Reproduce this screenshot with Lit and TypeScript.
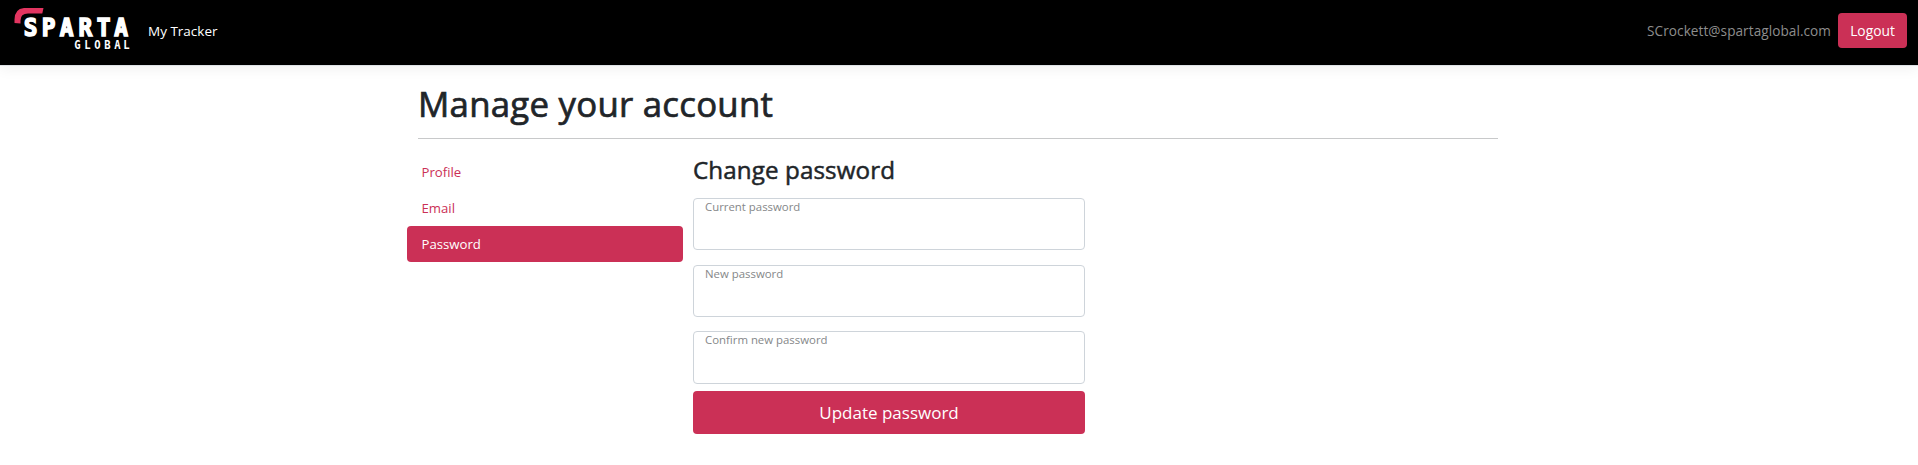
import { LitElement, html, svg, css } from "lit";
import { customElement } from "lit/decorators.js";
import { classMap } from "lit/directives/class-map.js";

const LINKS = ["Profile", "Email", "Password"];
const FIELDS = ["Current password", "New password", "Confirm new password"];

@customElement("sparta-logo")
class SpartaLogo extends LitElement {
  static styles = css`
    :host { display: block; width: 122px; height: 46px; }
    svg { display: block; }
    text { fill: #fff; text-anchor: middle; font-weight: 700; font-family: "DejaVu Sans Mono", monospace; }
    .big { font-size: 24.5px; stroke: #fff; stroke-width: 1.5; stroke-linejoin: miter; }
    .small { font-size: 12px; }
  `;
  render() {
    return html`<svg width="122" height="46" viewBox="10 8.4 122 46" role="img" aria-label="Sparta Global">
      ${svg`<path d="M14.5 23.5 V20 Q14.5 8.3 26 8.3 H43.5 L42.3 14 H28 Q20.5 14 20.5 21 V24 Z" fill="#e33560"/>
      <text class="big" transform="scale(.93 1)" x="32.8 52.2 71.6 91.9 111.3 130.2" y="36.4">SPARTA</text>
      <text class="small" transform="scale(.88 1)" x="88.1 99.4 110.8 122.2 133.5 143.8" y="49.8">GLOBAL</text>`}
    </svg>`;
  }
}

@customElement("app-root")
class AppRoot extends LitElement {
  static styles = css`
    :host {
      display: block; min-height: 465px; background: #fff; color: #212529;
      font: 14px/21px "Open Sans", "Noto Sans", sans-serif;
    }
    * { box-sizing: border-box; }
    header {
      height: 66px; display: flex; align-items: center; padding: 0 11px 4px 10px;
      background: #000; border-bottom: 1px solid #dee2e6;
      box-shadow: 0 4px 12px rgba(0, 0, 0, 0.05);
    }
    .tracker { margin: 1px 0 0 16px; color: #fff; font-size: 13.5px; flex: 1; }
    .mail { color: #8d8d8d; font-size: 13.6px; letter-spacing: 0.06px; margin: 0 7px 1px 0; }
    button {
      border: 0; border-radius: 4px; background: #cb3056; color: #fff;
      font-family: inherit; padding: 0;
    }
    .logout { width: 69px; height: 35px; font-size: 13.8px; }
    main { width: 1080px; margin: 14px 0 0 418px; }
    h1, h2 { margin: 0; font-weight: 400; white-space: nowrap; }
    h1 { font-size: 34.8px; line-height: 48px; letter-spacing: 0.25px; -webkit-text-stroke: 0.7px #212529; }
    hr { margin: 10px 0 14px; border: 0; height: 1px; background: #c8c9ca; }
    .row { display: flex; margin-left: -11px; }
    nav { width: 276px; padding-top: 1px; }
    nav div { height: 36px; line-height: 36px; padding: 0 14.5px; font-size: 13.2px; color: #cb3056; border-radius: 4px; }
    nav .active { background: #cb3056; color: #fff; }
    form { width: 392px; margin-left: 10px; padding-top: 1px; }
    h2 { font-size: 24.2px; line-height: 32px; margin-bottom: 12px; letter-spacing: 0.1px; -webkit-text-stroke: 0.5px #212529; }
    .field {
      height: 52px; margin-bottom: 15px; border: 1px solid #ced4da; border-radius: 4px;
      padding: 0 11px; font-size: 11.4px; line-height: 15px; color: #858789;
    }
    .field:nth-of-type(2) { margin-bottom: 14px; }
    .field:nth-of-type(3) { height: 53px; margin-bottom: 7px; }
    .submit { width: 392px; height: 43px; font-size: 17px; display: block; }
  `;
  render() {
    return html`
      <header>
        <sparta-logo></sparta-logo>
        <span class="tracker">My Tracker</span>
        <span class="mail">SCrockett@spartaglobal.com</span>
        <button class="logout">Logout</button>
      </header>
      <main>
        <h1>Manage your account</h1>
        <hr />
        <div class="row">
          <nav>${LINKS.map((l) => html`<div class=${classMap({ active: l === "Password" })}>${l}</div>`)}</nav>
          <form>
            <h2>Change password</h2>
            ${FIELDS.map((f) => html`<div class="field">${f}</div>`)}
            <button class="submit" type="button">Update password</button>
          </form>
        </div>
      </main>
    `;
  }
}
